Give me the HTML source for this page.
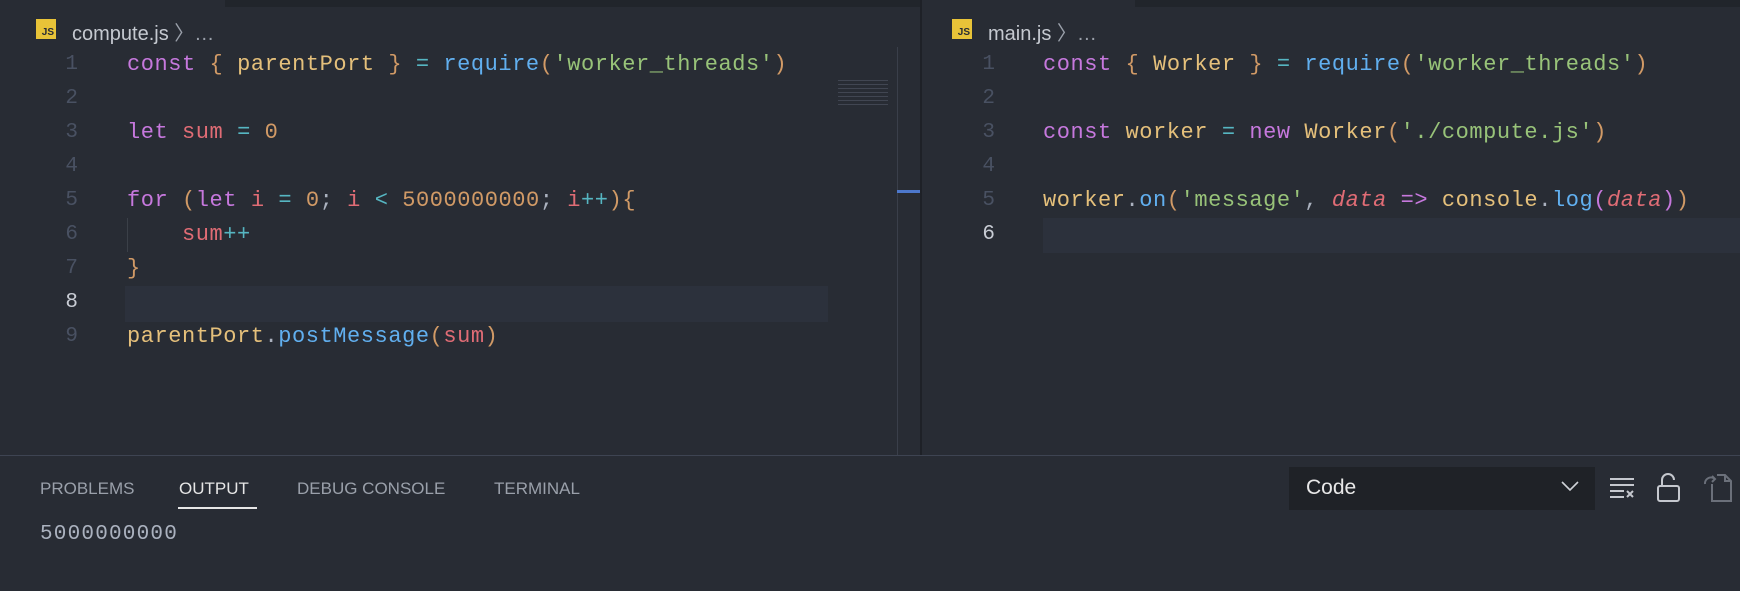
<!DOCTYPE html>
<html><head><meta charset="utf-8"><style>
*{margin:0;padding:0;box-sizing:border-box}
body{width:1740px;height:591px;background:#282c34;overflow:hidden;position:relative;font-family:"Liberation Sans",sans-serif}
.abs{position:absolute}
.code{font-family:"Liberation Mono",monospace;font-size:22px;letter-spacing:0.55px;white-space:pre;color:#abb2bf;line-height:34px}
.ln{font-family:"Liberation Mono",monospace;font-size:21px;color:#495162;line-height:34px;text-align:right;width:40px}
.k{color:#c678dd}.v{color:#e06c75}.s{color:#98c379}.n{color:#d19a66}.f{color:#61afef}.o{color:#56b6c2}.y{color:#e5c07b}.b{color:#d19a66}.i{color:#e06c75;font-style:italic}
.js{width:20px;height:20px;background:#e8c338;color:#282c34;font:bold 10px "Liberation Sans",sans-serif;display:flex;align-items:flex-end;justify-content:flex-end;padding:0 2px 1px 0}
.crumb{font-size:20px;color:#c5c9d0}
.tab{font-size:17px;color:#9aa0aa;top:479px}
</style></head><body>
<div class="abs" style="left:225px;top:0;width:695px;height:7px;background:#21252b"></div>
<div class="abs" style="left:1135px;top:0;width:605px;height:7px;background:#21252b"></div>

<div class="abs js" style="left:36px;top:19px">JS</div>
<div class="abs crumb" style="left:72px;top:17px">compute.js <span style="color:#9aa0aa">〉…</span></div>
<div class="abs" style="left:125px;top:286px;width:703px;height:36px;background:#2c313c"></div>
<div class="abs" style="left:127px;top:218px;width:1px;height:34px;background:#3b4048"></div>
<div class="abs ln" style="left:38px;top:48px">1<br>2<br>3<br>4<br>5<br>6<br>7<br><span style="color:#c8ccd4">8</span><br>9</div>
<div class="abs code" style="left:127px;top:48px"><span class="k">const</span> <span class="b">{</span> <span class="y">parentPort</span> <span class="b">}</span> <span class="o">=</span> <span class="f">require</span><span class="b">(</span><span class="s">'worker_threads'</span><span class="b">)</span>

<span class="k">let</span> <span class="v">sum</span> <span class="o">=</span> <span class="n">0</span>

<span class="k">for</span> <span class="b">(</span><span class="k">let</span> <span class="v">i</span> <span class="o">=</span> <span class="n">0</span>; <span class="v">i</span> <span class="o">&lt;</span> <span class="n">5000000000</span>; <span class="v">i</span><span class="o">++</span><span class="b">){</span>
    <span class="v">sum</span><span class="o">++</span>
<span class="b">}</span>

<span class="y">parentPort</span>.<span class="f">postMessage</span><span class="b">(</span><span class="v">sum</span><span class="b">)</span></div>
<div class="abs" style="left:838px;top:80px;width:50px;height:26px;opacity:.5;background:repeating-linear-gradient(#5a6070 0 1px,transparent 1px 4px)"></div>
<div class="abs" style="left:897px;top:47px;width:1px;height:408px;background:#3a3f4a"></div>
<div class="abs" style="left:897px;top:190px;width:24px;height:3px;background:#4d78cc"></div>
<div class="abs" style="left:920px;top:0;width:2px;height:455px;background:#1e2127"></div>

<div class="abs js" style="left:952px;top:19px">JS</div>
<div class="abs crumb" style="left:988px;top:17px">main.js <span style="color:#9aa0aa">〉…</span></div>
<div class="abs" style="left:1043px;top:218px;width:697px;height:35px;background:#2c313c"></div>
<div class="abs ln" style="left:955px;top:48px">1<br>2<br>3<br>4<br>5<br><span style="color:#c8ccd4">6</span></div>
<div class="abs code" style="left:1043px;top:48px"><span class="k">const</span> <span class="b">{</span> <span class="y">Worker</span> <span class="b">}</span> <span class="o">=</span> <span class="f">require</span><span class="b">(</span><span class="s">'worker_threads'</span><span class="b">)</span>

<span class="k">const</span> <span class="y">worker</span> <span class="o">=</span> <span class="k">new</span> <span class="y">Worker</span><span class="b">(</span><span class="s">'./compute.js'</span><span class="b">)</span>

<span class="y">worker</span>.<span class="f">on</span><span class="b">(</span><span class="s">'message'</span>, <span class="i">data</span> <span class="k">=&gt;</span> <span class="y">console</span>.<span class="f">log</span><span class="k">(</span><span class="i">data</span><span class="k">)</span><span class="b">)</span></div>

<div class="abs" style="left:0;top:455px;width:1740px;height:1px;background:#3e4452"></div>
<div class="abs tab" style="left:40px">PROBLEMS</div>
<div class="abs tab" style="left:179px;color:#e6e6e6">OUTPUT</div>
<div class="abs" style="left:178px;top:507px;width:79px;height:2px;background:#e6e6e6"></div>
<div class="abs tab" style="left:297px">DEBUG CONSOLE</div>
<div class="abs tab" style="left:494px">TERMINAL</div>
<div class="abs code" style="left:40px;top:518px;font-size:21px;letter-spacing:1.2px;color:#abb2bf">5000000000</div>

<div class="abs" style="left:1289px;top:467px;width:306px;height:43px;background:#1f2227"></div>
<div class="abs" style="left:1306px;top:476px;font-size:21px;color:#e8e8e8">Code</div>
<svg class="abs" style="left:1560px;top:479px" width="20" height="14" viewBox="0 0 20 14"><path d="M2 3l8 8 8-8" fill="none" stroke="#cfd2d8" stroke-width="1.6"/></svg>
<svg class="abs" style="left:1608px;top:475px" width="30" height="28" viewBox="0 0 30 28"><path d="M2 4h24M2 10h24M2 16h14M2 22h14" stroke="#c5c8ce" stroke-width="2"/><path d="M19 16l6 6M25 16l-6 6" stroke="#c5c8ce" stroke-width="2"/></svg>
<svg class="abs" style="left:1655px;top:472px" width="28" height="32" viewBox="0 0 28 32"><rect x="3" y="14" width="21" height="15" rx="2" fill="none" stroke="#c5c8ce" stroke-width="2"/><path d="M7 14V8a6 6 0 0 1 12 0" fill="none" stroke="#c5c8ce" stroke-width="2"/></svg>
<svg class="abs" style="left:1702px;top:472px" width="32" height="32" viewBox="0 0 32 32"><path d="M10 12v17h19V9l-6-6h-8" fill="none" stroke="#6b707a" stroke-width="2"/><path d="M23 3v6h6" fill="none" stroke="#6b707a" stroke-width="2"/><path d="M3 12a6 6 0 0 1 10-5M10 4l3 3-3 3" fill="none" stroke="#6b707a" stroke-width="2"/></svg>
</body></html>
